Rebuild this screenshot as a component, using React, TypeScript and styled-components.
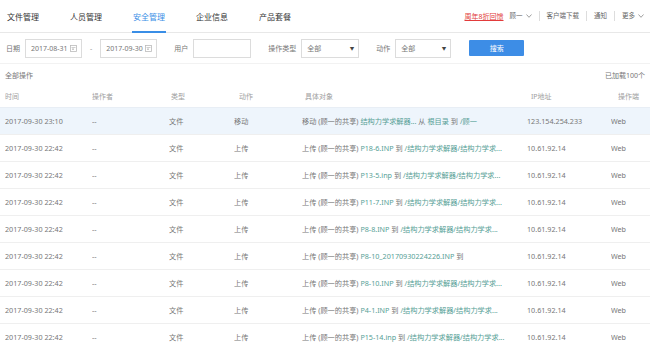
import React from 'react';
import styled, { createGlobalStyle, css } from 'styled-components';

const GlobalStyle = createGlobalStyle`
  html, body {
    margin: 0;
    padding: 0;
    background: #fff;
    overflow: hidden;
  }
  body {
    font-family: "Noto Sans", "Noto Sans CJK SC", sans-serif;
    color: #777;
  }
`;

const Page = styled.div`
  width: 650px;
  height: 345px;
  overflow: hidden;
`;

const TopNav = styled.div`
  display: flex;
  align-items: stretch;
  height: 32px;
  border-bottom: 1px solid #e8e8e8;
  padding-left: 6px;
`;

const Tab = styled.div<{ active?: boolean }>`
  display: flex;
  align-items: center;
  padding: 1px 1px 0;
  margin-right: 29px;
  font-size: 8px;
  color: #333;
  border-bottom: 2px solid transparent;
  margin-bottom: -1px;
  ${p =>
    p.active &&
    css`
      color: #3a8ee6;
      border-bottom-color: #3a8ee6;
    `}
`;

const NavRight = styled.div`
  margin-left: auto;
  display: flex;
  align-items: center;
  padding-right: 6px;
  font-size: 6.5px;
  color: #666;
`;

const Promo = styled.span`
  font-size: 7px;
  color: #e23b3b;
  text-decoration: underline;
  margin-right: 6px;
`;

const NavItem = styled.span<{ divider?: boolean; last?: boolean }>`
  display: flex;
  align-items: center;
  gap: 3px;
  padding: 0 ${p => (p.last ? 0 : 7)}px 0 ${p => (p.divider ? 7 : 0)}px;
  line-height: 10px;
  ${p =>
    p.divider &&
    css`
      border-left: 1px solid #ddd;
    `}
`;

const FilterBar = styled.div`
  display: flex;
  align-items: center;
  height: 30px;
  padding: 0 6px;
  border-bottom: 1px solid #f2f2f2;
  gap: 17px;
`;

const FilterGroup = styled.div`
  display: flex;
  align-items: center;
  gap: 5px;
`;

const Label = styled.span`
  font-size: 7px;
  color: #777;
  white-space: nowrap;
`;

const Field = styled.div<{ w: number }>`
  box-sizing: border-box;
  width: ${p => p.w}px;
  height: 19px;
  border: 1px solid #dcdcdc;
  display: flex;
  align-items: center;
  justify-content: space-between;
  padding: 0 4px 0 5px;
  font-size: 7px;
  color: #777;
  background: #fff;
`;

const Dash = styled.span`
  font-size: 7px;
  color: #999;
  margin: 0 3px;
`;

const Caret = styled.span`
  font-size: 4.5px;
  color: #444;
`;

const SearchButton = styled.button`
  width: 55px;
  height: 16px;
  margin-left: 1px;
  border: none;
  border-radius: 1px;
  background: #3d8de6;
  color: #fff;
  font-family: inherit;
  font-size: 7px;
  padding: 0;
`;

const InfoBar = styled.div`
  display: grid;
  grid-template-columns: 600px max-content;
  align-items: center;
  height: 21px;
  padding-left: 5px;
  font-size: 7px;
  color: #777;
  white-space: nowrap;
`;

const RowGrid = styled.div<{ header?: boolean; active?: boolean }>`
  display: grid;
  align-items: center;
  padding-left: 5px;
  white-space: nowrap;
  font-size: 7.2px;
  border-bottom: 1px solid #efefef;
  ${p =>
    p.header
      ? css`
          grid-template-columns: 87px 79px 68px 66px 226px 87px 1fr;
          height: 22px;
          color: #a0a0a0;
          font-size: 7px;
          border-bottom-color: #e8eef5;
        `
      : css`
          grid-template-columns: 87px 77px 65px 68px 225px 84px 1fr;
          height: 26px;
          color: #777;
        `}
  ${p =>
    p.active &&
    css`
      background: #eef5fc;
    `}
`;

const Cell = styled.div`
  overflow: hidden;
`;

const Link = styled.span`
  color: #56a096;
`;

const Chevron = () => (
  <svg width="6" height="4" viewBox="0 0 6 4">
    <polyline points="0.5,0.5 3,3.3 5.5,0.5" fill="none" stroke="#888" strokeWidth="0.8" />
  </svg>
);

const CalendarIcon = () => (
  <svg width="7" height="7" viewBox="0 0 7 7">
    <rect x="0.5" y="0.5" width="6" height="6" fill="none" stroke="#bbb" strokeWidth="0.8" />
    <line x1="1.5" y1="2.5" x2="5.5" y2="2.5" stroke="#bbb" strokeWidth="0.7" />
    <rect x="2" y="3.4" width="2" height="1.6" fill="#ccc" />
  </svg>
);

type Part = [boolean, string];

type Row = {
  time: string;
  action: string;
  object: Part[];
  ip: string;
};

const upload = (file: string, tail = true): Part[] =>
  tail
    ? [
        [false, '上传 (顾一的共享) '],
        [true, file],
        [false, ' 到 '],
        [true, '/结构力学求解器/结构力学求...'],
      ]
    : [
        [false, '上传 (顾一的共享) '],
        [true, file],
        [false, ' 到'],
      ];

const rows: Row[] = [
  {
    time: '2017-09-30 23:10',
    action: '移动',
    object: [
      [false, '移动 (顾一的共享) '],
      [true, '结构力学求解器...'],
      [false, ' 从 '],
      [true, '根目录'],
      [false, ' 到 '],
      [true, '/顾一'],
    ],
    ip: '123.154.254.233',
  },
  { time: '2017-09-30 22:42', action: '上传', object: upload('P18-6.INP'), ip: '10.61.92.14' },
  { time: '2017-09-30 22:42', action: '上传', object: upload('P13-5.inp'), ip: '10.61.92.14' },
  { time: '2017-09-30 22:42', action: '上传', object: upload('P11-7.INP'), ip: '10.61.92.14' },
  { time: '2017-09-30 22:42', action: '上传', object: upload('P8-8.INP'), ip: '10.61.92.14' },
  {
    time: '2017-09-30 22:42',
    action: '上传',
    object: upload('P8-10_20170930224226.INP', false),
    ip: '10.61.92.14',
  },
  { time: '2017-09-30 22:42', action: '上传', object: upload('P8-10.INP'), ip: '10.61.92.14' },
  { time: '2017-09-30 22:42', action: '上传', object: upload('P4-1.INP'), ip: '10.61.92.14' },
  { time: '2017-09-30 22:42', action: '上传', object: upload('P15-14.inp'), ip: '10.61.92.14' },
];

const tabs = ['文件管理', '人员管理', '安全管理', '企业信息', '产品套餐'];

function App() {
  return (
    <Page>
      <GlobalStyle />
      <TopNav>
        {tabs.map(t => (
          <Tab key={t} active={t === '安全管理'}>
            {t}
          </Tab>
        ))}
        <NavRight>
          <Promo>周年8折回馈</Promo>
          <NavItem>
            顾一 <Chevron />
          </NavItem>
          <NavItem divider>客户端下载</NavItem>
          <NavItem divider>通知</NavItem>
          <NavItem divider last>
            更多 <Chevron />
          </NavItem>
        </NavRight>
      </TopNav>

      <FilterBar>
        <FilterGroup>
          <Label>日期</Label>
          <Field w={57}>
            2017-08-31 <CalendarIcon />
          </Field>
          <Dash>-</Dash>
          <Field w={57}>
            2017-09-30 <CalendarIcon />
          </Field>
        </FilterGroup>
        <FilterGroup>
          <Label>用户</Label>
          <Field w={58} />
        </FilterGroup>
        <FilterGroup>
          <Label>操作类型</Label>
          <Field w={58}>
            全部 <Caret>▼</Caret>
          </Field>
        </FilterGroup>
        <FilterGroup>
          <Label>动作</Label>
          <Field w={56}>
            全部 <Caret>▼</Caret>
          </Field>
        </FilterGroup>
        <SearchButton>搜索</SearchButton>
      </FilterBar>

      <InfoBar>
        <span>全部操作</span>
        <span>已加载100个</span>
      </InfoBar>

      <RowGrid header>
        <Cell>时间</Cell>
        <Cell>操作者</Cell>
        <Cell>类型</Cell>
        <Cell>动作</Cell>
        <Cell>具体对象</Cell>
        <Cell>IP地址</Cell>
        <Cell>操作端</Cell>
      </RowGrid>

      {rows.map((r, i) => (
        <RowGrid key={i} active={i === 0}>
          <Cell>{r.time}</Cell>
          <Cell>--</Cell>
          <Cell>文件</Cell>
          <Cell>{r.action}</Cell>
          <Cell>
            {r.object.map(([isLink, text], j) =>
              isLink ? <Link key={j}>{text}</Link> : <span key={j}>{text}</span>
            )}
          </Cell>
          <Cell>{r.ip}</Cell>
          <Cell>Web</Cell>
        </RowGrid>
      ))}
    </Page>
  );
}

export default App;
